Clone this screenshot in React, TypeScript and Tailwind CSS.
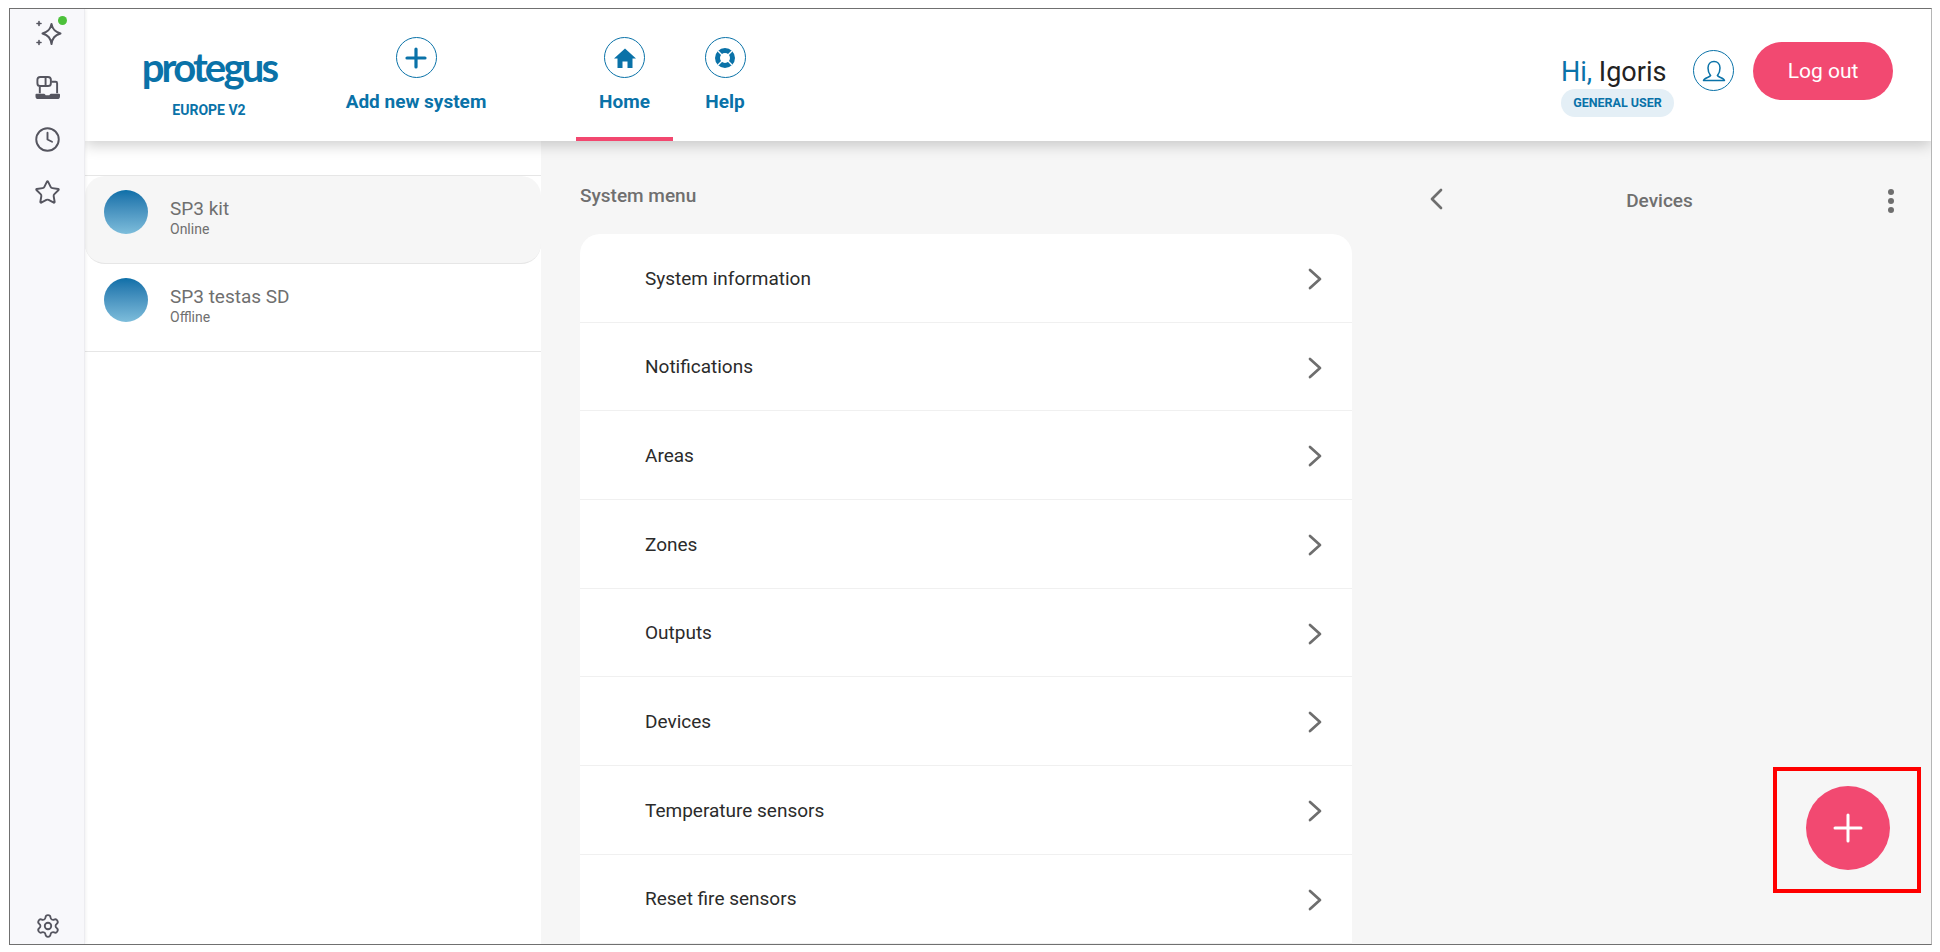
import { Clock, Settings, Star } from "lucide-react";

const menuItems = [
  "System information",
  "Notifications",
  "Areas",
  "Zones",
  "Outputs",
  "Devices",
  "Temperature sensors",
  "Reset fire sensors",
];

const systems = [
  { name: "SP3 kit", status: "Online", selected: true },
  { name: "SP3 testas SD", status: "Offline", selected: false },
];

function Sparkle() {
  return (
    <svg width="28" height="28" viewBox="0 0 28 28" fill="none" stroke="#55555f" strokeWidth="2" strokeLinejoin="round" strokeLinecap="round">
      <path d="M16.500 5 C17.500 10 19.500 12.500 25.500 14.500 C19.500 16.500 17.500 19 16.500 25 C15.500 19 13.500 16.500 7.500 14.500 C13.500 12.500 15.500 10 16.500 5Z" />
      <path d="M4 2.500v4M2 4.500h4M4 21.500v4M2 23.500h4" strokeWidth="1.6" />
    </svg>
  );
}

function LaptopCam() {
  return (
    <svg width="25" height="25" viewBox="0 0 26 26" fill="none" stroke="#55555f" strokeWidth="2" strokeLinejoin="round">
      <rect x="2.500" y="2" width="14" height="9.500" rx="3" />
      <path d="M11 2.500v9" />
      <path d="M17 7h4.500a1.500 1.500 0 0 1 1.500 1.500V19M5 12v7" />
      <path d="M1.500 20.500h8l1 1.500h5l1-1.500h8.500v1.500a2 2 0 0 1-2 2h-19.500a2 2 0 0 1-2-2z" fill="#55555f" />
    </svg>
  );
}

function HouseIcon() {
  return (
    <svg width="22" height="20" viewBox="0 0 22 20" fill="currentColor">
      <path d="M11 0.500 L22 10.500 H18.500 V20 H13.500 V13.500 H8.500 V20 H3.500 V10.500 H0 Z" />
    </svg>
  );
}

function LifeRingIcon() {
  return (
    <svg width="24" height="24" viewBox="0 0 24 24" fill="none" stroke="currentColor">
      <circle cx="12" cy="12" r="7.500" strokeWidth="5" />
      <path d="M5 5 L9 9 M19 5 L15 9 M5 19 L9 15 M19 19 L15 15" stroke="#fff" strokeWidth="1.400" />
    </svg>
  );
}

function CircleIcon({ children }: { children: React.ReactNode }) {
  return (
    <span className="flex h-[41px] w-[41px] items-center justify-center rounded-full border-[1.5px] border-[#0a72a8] text-[#0a72a8]">
      {children}
    </span>
  );
}

function Chevron({ left = false }: { left?: boolean }) {
  return (
    <svg width="14" height="22" viewBox="0 0 14 22" fill="none" stroke="#6e6e6e" strokeWidth="2.700" strokeLinecap="round" strokeLinejoin="round">
      <path d={left ? "M12 2 L3 11 L12 20" : "M2 2 L12 11 L2 20"} />
    </svg>
  );
}

function NavItem({ icon, label, active = false, className = "" }: { icon: React.ReactNode; label: string; active?: boolean; className?: string }) {
  return (
    <div className={`flex h-full flex-col items-center border-b-4 pt-[28px] ${active ? "border-[#f2476f]" : "border-transparent"} ${className}`}>
      <CircleIcon>{icon}</CircleIcon>
      <span className="mt-[12px] text-[19px] leading-[24px] font-bold whitespace-nowrap text-[#0a72a8]">{label}</span>
    </div>
  );
}

export default function App() {
  return (
    <div className="h-[952px] w-[1940px] overflow-hidden bg-white pt-[8px] pl-[9px] font-['Roboto',sans-serif]">
      <div className="relative flex h-[937px] w-[1923px] overflow-hidden border border-[#707070] border-r-[#b5b5b5]">
        <aside className="z-20 flex w-[75px] shrink-0 flex-col items-center border-r border-[#ececf0] bg-[#f8f8fb] pb-[5px] shadow-[1px_0_3px_rgba(0,0,0,0.06)]">
          <div className="relative mt-[9px] ml-[3px] flex h-[30px] w-[30px] items-center justify-center">
            <Sparkle />
            <span className="absolute -top-[2px] -right-[3px] h-[9px] w-[9px] rounded-full bg-[#4cc13a]" />
          </div>
          <div className="mt-[25px] ml-[1px] flex h-[28px] items-center">
            <LaptopCam />
          </div>
          <div className="mt-[25px] ml-[1px] flex h-[26px] items-center">
            <Clock size={27} color="#55555f" strokeWidth={1.7} />
          </div>
          <div className="mt-[27px] ml-[1px] flex h-[26px] items-center">
            <Star size={27} color="#55555f" strokeWidth={1.7} />
          </div>
          <div className="mt-auto ml-[1px] flex h-[26px] items-center">
            <Settings size={26} color="#55555f" strokeWidth={1.7} />
          </div>
        </aside>

        <div className="flex min-w-0 flex-1 flex-col">
          <header className="z-10 flex h-[132px] shrink-0 items-stretch bg-white pr-[38px] shadow-[0_4px_14px_rgba(0,0,0,0.2)]">
            <div className="ml-[57px] flex w-[134px] flex-col items-center pt-[36px]">
              <span className="font-['Lato',sans-serif] text-[40px] leading-[44px] font-bold tracking-[-2.800px] text-[#0a72a8]">protegus</span>
              <span className="mt-[13px] text-[14px] leading-[16px] font-bold text-[#0a72a8]">EUROPE V2</span>
            </div>
            <NavItem className="ml-[69px] w-[142px]" icon={
              <svg width="22" height="22" viewBox="0 0 22 22" fill="none" stroke="currentColor" strokeWidth="3.200" strokeLinecap="round"><path d="M11 2v18M2 11h18" /></svg>
            } label="Add new system" />
            <NavItem active className="ml-[89px] w-[97px]" icon={<HouseIcon />} label="Home" />
            <NavItem className="ml-[32px] w-[40px]" icon={<LifeRingIcon />} label="Help" />
            <div className="ml-auto flex items-start pt-[33px]">
              <div className="mt-[15px] flex flex-col items-start">
                <span className="text-[27px] leading-[30px] text-[#222]"><span className="text-[#0a72a8]">Hi,</span> Igoris</span>
                <span className="mt-[2px] flex h-[28px] w-[113px] items-center justify-center rounded-full bg-[#e4eff6] text-[12.500px] font-bold text-[#0a72a8]">GENERAL USER</span>
              </div>
              <span className="mt-[8px] ml-[19px] flex h-[41px] w-[41px] items-center justify-center rounded-full border-[1.5px] border-[#0a72a8]">
                <svg width="26" height="26" viewBox="0 0 26 26" fill="none" stroke="#0a72a8" strokeWidth="1.500" strokeLinejoin="round" strokeLinecap="round">
                  <path d="M9.500 17.500 C7.800 15.500 7 12.500 7 10 C7 6 9.500 3.500 13 3.500 C16.500 3.500 19 6 19 10 C19 12.500 18.200 15.500 16.500 17.500" />
                  <path d="M9.500 17.500 C9 19.500 3 19.500 2.500 22.500 H23.500 C23 19.500 17 19.500 16.500 17.500" />
                </svg>
              </span>
              <button className="ml-[19px] flex h-[58px] w-[140px] items-center justify-center rounded-full bg-[#f24971] pt-[1px] text-[21px] text-white">Log out</button>
            </div>
          </header>

          <div className="flex min-h-0 flex-1 bg-[#f6f6f6]">
            <div className="w-[456px] shrink-0 bg-white pt-[34px]">
              <div className="border-t border-[#e6e6e6]">
                {systems.map((system) => (
                  <div
                    key={system.name}
                    className={`flex h-[88px] items-start gap-[22px] border-b border-[#e6e6e6] pt-[14px] pl-[19px] ${system.selected ? "rounded-[20px] bg-[#f6f6f6]" : "bg-white"}`}
                  >
                    <span className="h-[44px] w-[44px] shrink-0 rounded-full bg-gradient-to-b from-[#0a6fa8] to-[#7dbddb]" />
                    <div className="pt-[7px] text-[#6f6f6f]">
                      <p className="text-[19px] leading-[24px]">{system.name}</p>
                      <p className="text-[14px] leading-[16px]">{system.status}</p>
                    </div>
                  </div>
                ))}
              </div>
            </div>

            <div className="w-[811px] shrink-0 pl-[39px]">
              <h2 className="pt-[43px] text-[19px] leading-[24px] font-medium text-[#6f6f6f]">System menu</h2>
              <div className="mt-[26px] rounded-t-[20px] bg-white">
                {menuItems.map((item) => (
                  <div key={item} className="flex h-[88.700px] items-center justify-between border-b border-[#f0f0f0] pt-[2px] pr-[30px] pl-[65px]">
                    <span className="text-[19px] text-[#2b2b2b]">{item}</span>
                    <Chevron />
                  </div>
                ))}
              </div>
            </div>

            <div className="flex min-w-0 flex-1 items-start justify-between pt-[47px] pr-[35px] pl-[77px]">
              <Chevron left />
              <span className="mt-[1px] pr-[10px] text-[19px] leading-[24px] font-medium text-[#6f6f6f]">Devices</span>
              <svg width="10" height="26" viewBox="0 0 10 26" fill="#6e6e6e">
                <circle cx="5" cy="4" r="3" />
                <circle cx="5" cy="13" r="3" />
                <circle cx="5" cy="22" r="3" />
              </svg>
            </div>
          </div>
        </div>

        <button className="absolute top-[777px] left-[1796px] flex h-[84px] w-[84px] items-center justify-center rounded-full bg-[#f24971]">
          <svg width="30" height="30" viewBox="0 0 30 30" stroke="#fff" strokeWidth="3" strokeLinecap="round"><path d="M15 2v26M2 15h26" /></svg>
        </button>
        <div className="pointer-events-none absolute top-[758px] left-[1763px] h-[126px] w-[148px] border-[4px] border-[#ff0000]" />
      </div>
    </div>
  );
}
